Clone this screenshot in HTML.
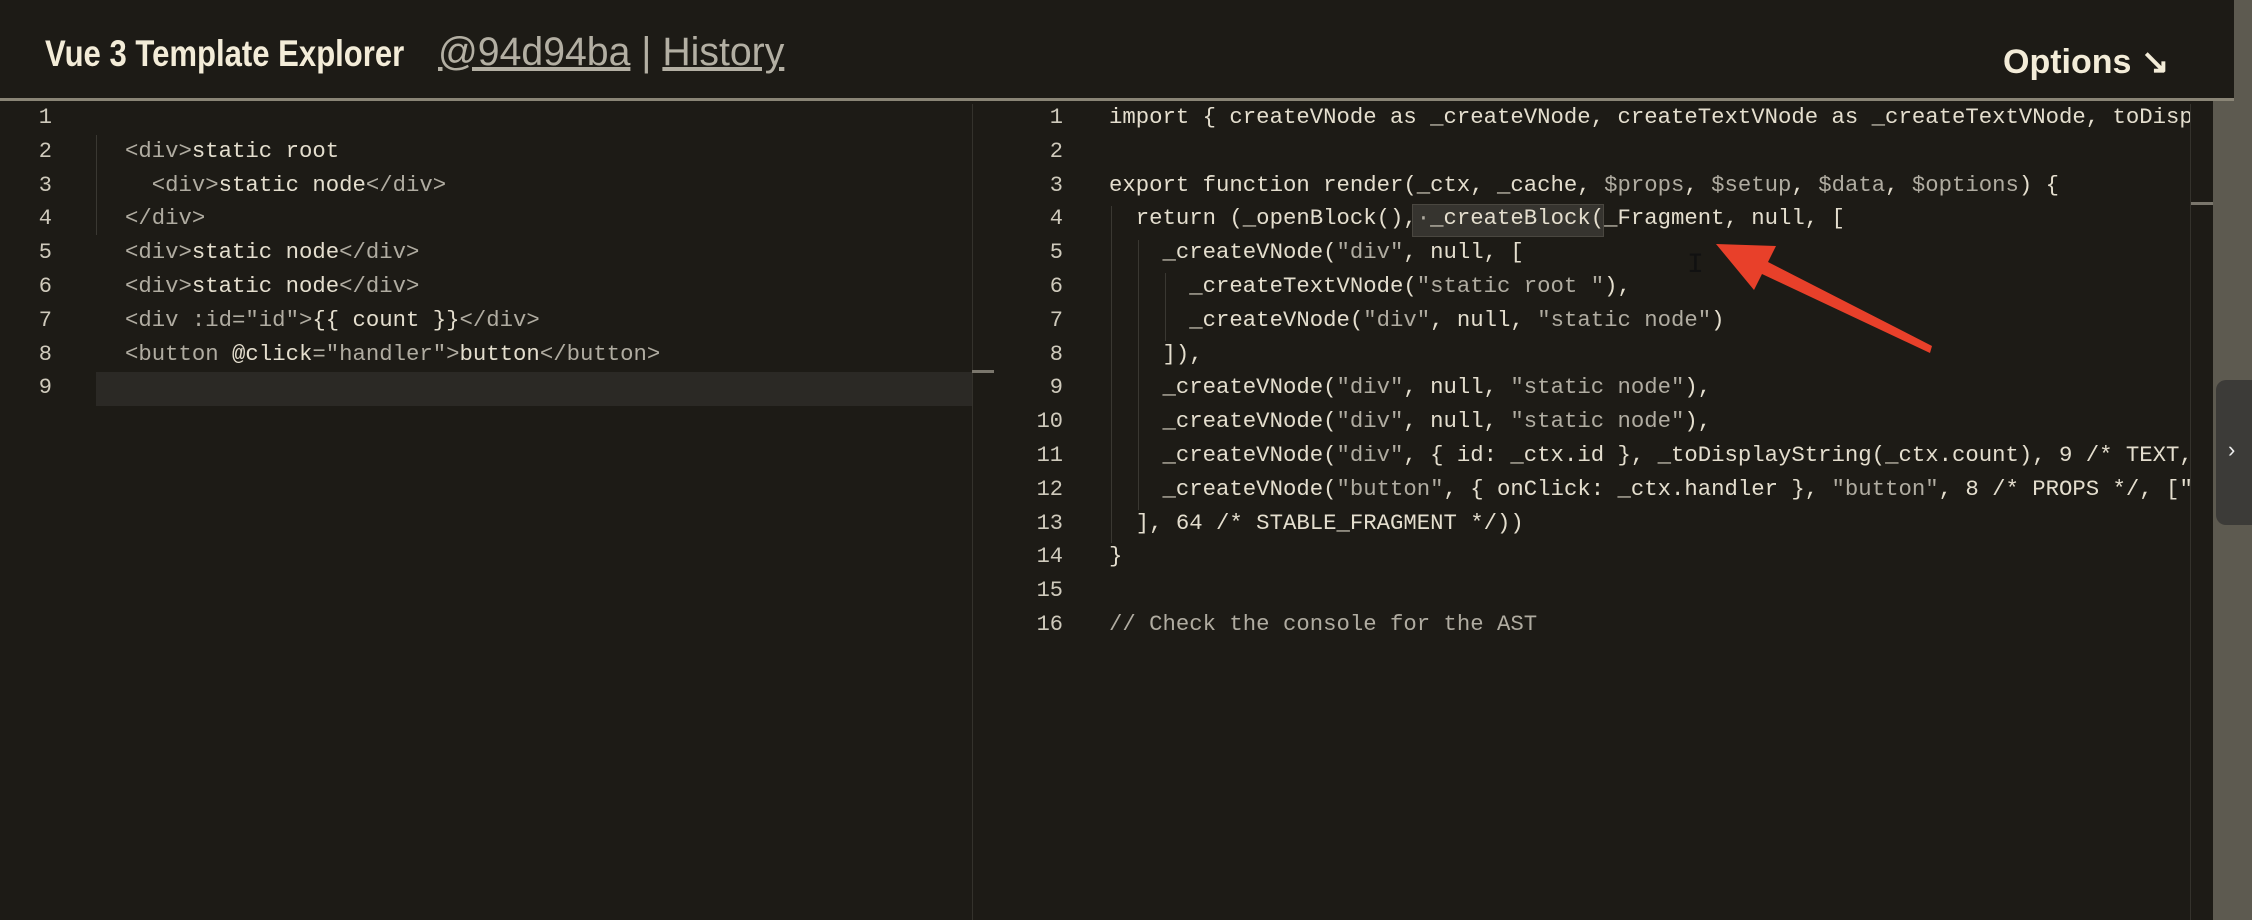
<!DOCTYPE html>
<html><head><meta charset="utf-8"><style>
*{margin:0;padding:0;box-sizing:border-box}
body{width:2252px;height:920px;background:#1d1b16;overflow:hidden;position:relative;font-family:"Liberation Sans",sans-serif}
#hdr{position:absolute;left:0;top:0;width:2234px;height:101px;background:#1d1b16;border-bottom:3px solid #8a8576}
.t{position:absolute;white-space:pre}
.code{font-family:"Liberation Mono",monospace;font-size:22.3px;line-height:33.8px;color:#e4dece}
.g{color:#b0aca1}
.ln{position:absolute;font-family:"Liberation Mono",monospace;font-size:22px;line-height:33.8px;color:#cfcabc;text-align:right}
</style></head><body>
<div style="position:absolute;left:2213px;top:0;width:39px;height:920px;background:#5d5a50"></div>
<div id="hdr"></div>
<div class="t" style="left:45px;top:33px;font-size:37px;font-weight:bold;color:#f3ecd8;transform:scaleX(0.84);transform-origin:left">Vue 3 Template Explorer</div>
<div class="t" style="left:438px;top:30px;font-size:40px;color:#b3afa3;transform:scaleX(0.98);transform-origin:left"><u>@94d94ba</u> | <u>History</u></div>
<div class="t" style="left:2003px;top:42px;font-size:34px;font-weight:bold;color:#f3ecd8">Options ↘</div>

<!-- left panel -->
<div style="position:absolute;left:96px;top:372px;width:876px;height:34px;background:#2b2925"></div>
<div style="position:absolute;left:972px;top:104px;width:1px;height:816px;background:#34322c"></div>
<div style="position:absolute;left:972px;top:370px;width:22px;height:3px;background:#7a766c"></div>
<div style="position:absolute;left:96px;top:135px;width:1px;height:100px;background:#3a3832"></div>
<div class="ln" style="left:20px;top:101px;width:32px">1<br>2<br>3<br>4<br>5<br>6<br>7<br>8<br>9</div>
<div class="t code" style="left:125px;top:101px">
<span class="g">&lt;div&gt;</span>static root
  <span class="g">&lt;div&gt;</span>static node<span class="g">&lt;/div&gt;</span>
<span class="g">&lt;/div&gt;</span>
<span class="g">&lt;div&gt;</span>static node<span class="g">&lt;/div&gt;</span>
<span class="g">&lt;div&gt;</span>static node<span class="g">&lt;/div&gt;</span>
<span class="g">&lt;div :id="id"&gt;</span>{{ count }}<span class="g">&lt;/div&gt;</span>
<span class="g">&lt;button</span> @click<span class="g">="handler"&gt;</span>button<span class="g">&lt;/button&gt;</span></div>

<!-- right panel -->
<div style="position:absolute;left:2190px;top:104px;width:1px;height:816px;background:#34322c"></div>
<div style="position:absolute;left:2191px;top:202px;width:22px;height:3px;background:#7a766c"></div>
<div style="position:absolute;left:1412px;top:204px;width:192px;height:33px;background:#36342f;border:1px solid #4a4740"></div>
<div class="ln" style="left:1010px;top:101px;width:53px">1<br>2<br>3<br>4<br>5<br>6<br>7<br>8<br>9<br>10<br>11<br>12<br>13<br>14<br>15<br>16</div>
<div style="position:absolute;left:1111px;top:206px;width:1px;height:337px;background:#3a3832"></div>
<div style="position:absolute;left:1138px;top:240px;width:1px;height:270px;background:#3a3832"></div>
<div style="position:absolute;left:1165px;top:273px;width:1px;height:68px;background:#3a3832"></div>
<div style="position:absolute;left:1109px;top:101px;width:1081px;height:600px;overflow:hidden">
<div class="t code" style="left:0;top:0">import { createVNode as _createVNode, createTextVNode as _createTextVNode, toDisplayString as _toDisplayString

export function render(_ctx, _cache, <span class="g">$props</span>, <span class="g">$setup</span>, <span class="g">$data</span>, <span class="g">$options</span>) {
  return (_openBlock(),<span class="g">·</span>_createBlock(_Fragment, null, [
    _createVNode(<span class="g">"div"</span>, null, [
      _createTextVNode(<span class="g">"static root "</span>),
      _createVNode(<span class="g">"div"</span>, null, <span class="g">"static node"</span>)
    ]),
    _createVNode(<span class="g">"div"</span>, null, <span class="g">"static node"</span>),
    _createVNode(<span class="g">"div"</span>, null, <span class="g">"static node"</span>),
    _createVNode(<span class="g">"div"</span>, { id: _ctx.id }, _toDisplayString(_ctx.count), 9 /* TEXT, PROPS */, ["id"]),
    _createVNode(<span class="g">"button"</span>, { onClick: _ctx.handler }, <span class="g">"button"</span>, 8 /* PROPS */, ["onClick"])
  ], 64 /* STABLE_FRAGMENT */))
}

<span class="g">// Check the console for the AST</span></div>
</div>
<div style="position:absolute;left:2216px;top:380px;width:40px;height:145px;background:#3c3b38;border-radius:10px 0 0 10px"></div>
<div class="t" style="left:2228px;top:437px;font-size:22px;color:#eee">›</div>

<div class="t" style="left:1687px;top:250px;font-family:'Liberation Mono',monospace;font-size:28px;color:#111">I</div>
<svg style="position:absolute;left:0;top:0" width="2252" height="920">
<polygon points="1716,244 1776,246 1768,262 1932,346 1930,353 1762,274 1754,290" fill="#e8402a"/>
</svg>
</body></html>
